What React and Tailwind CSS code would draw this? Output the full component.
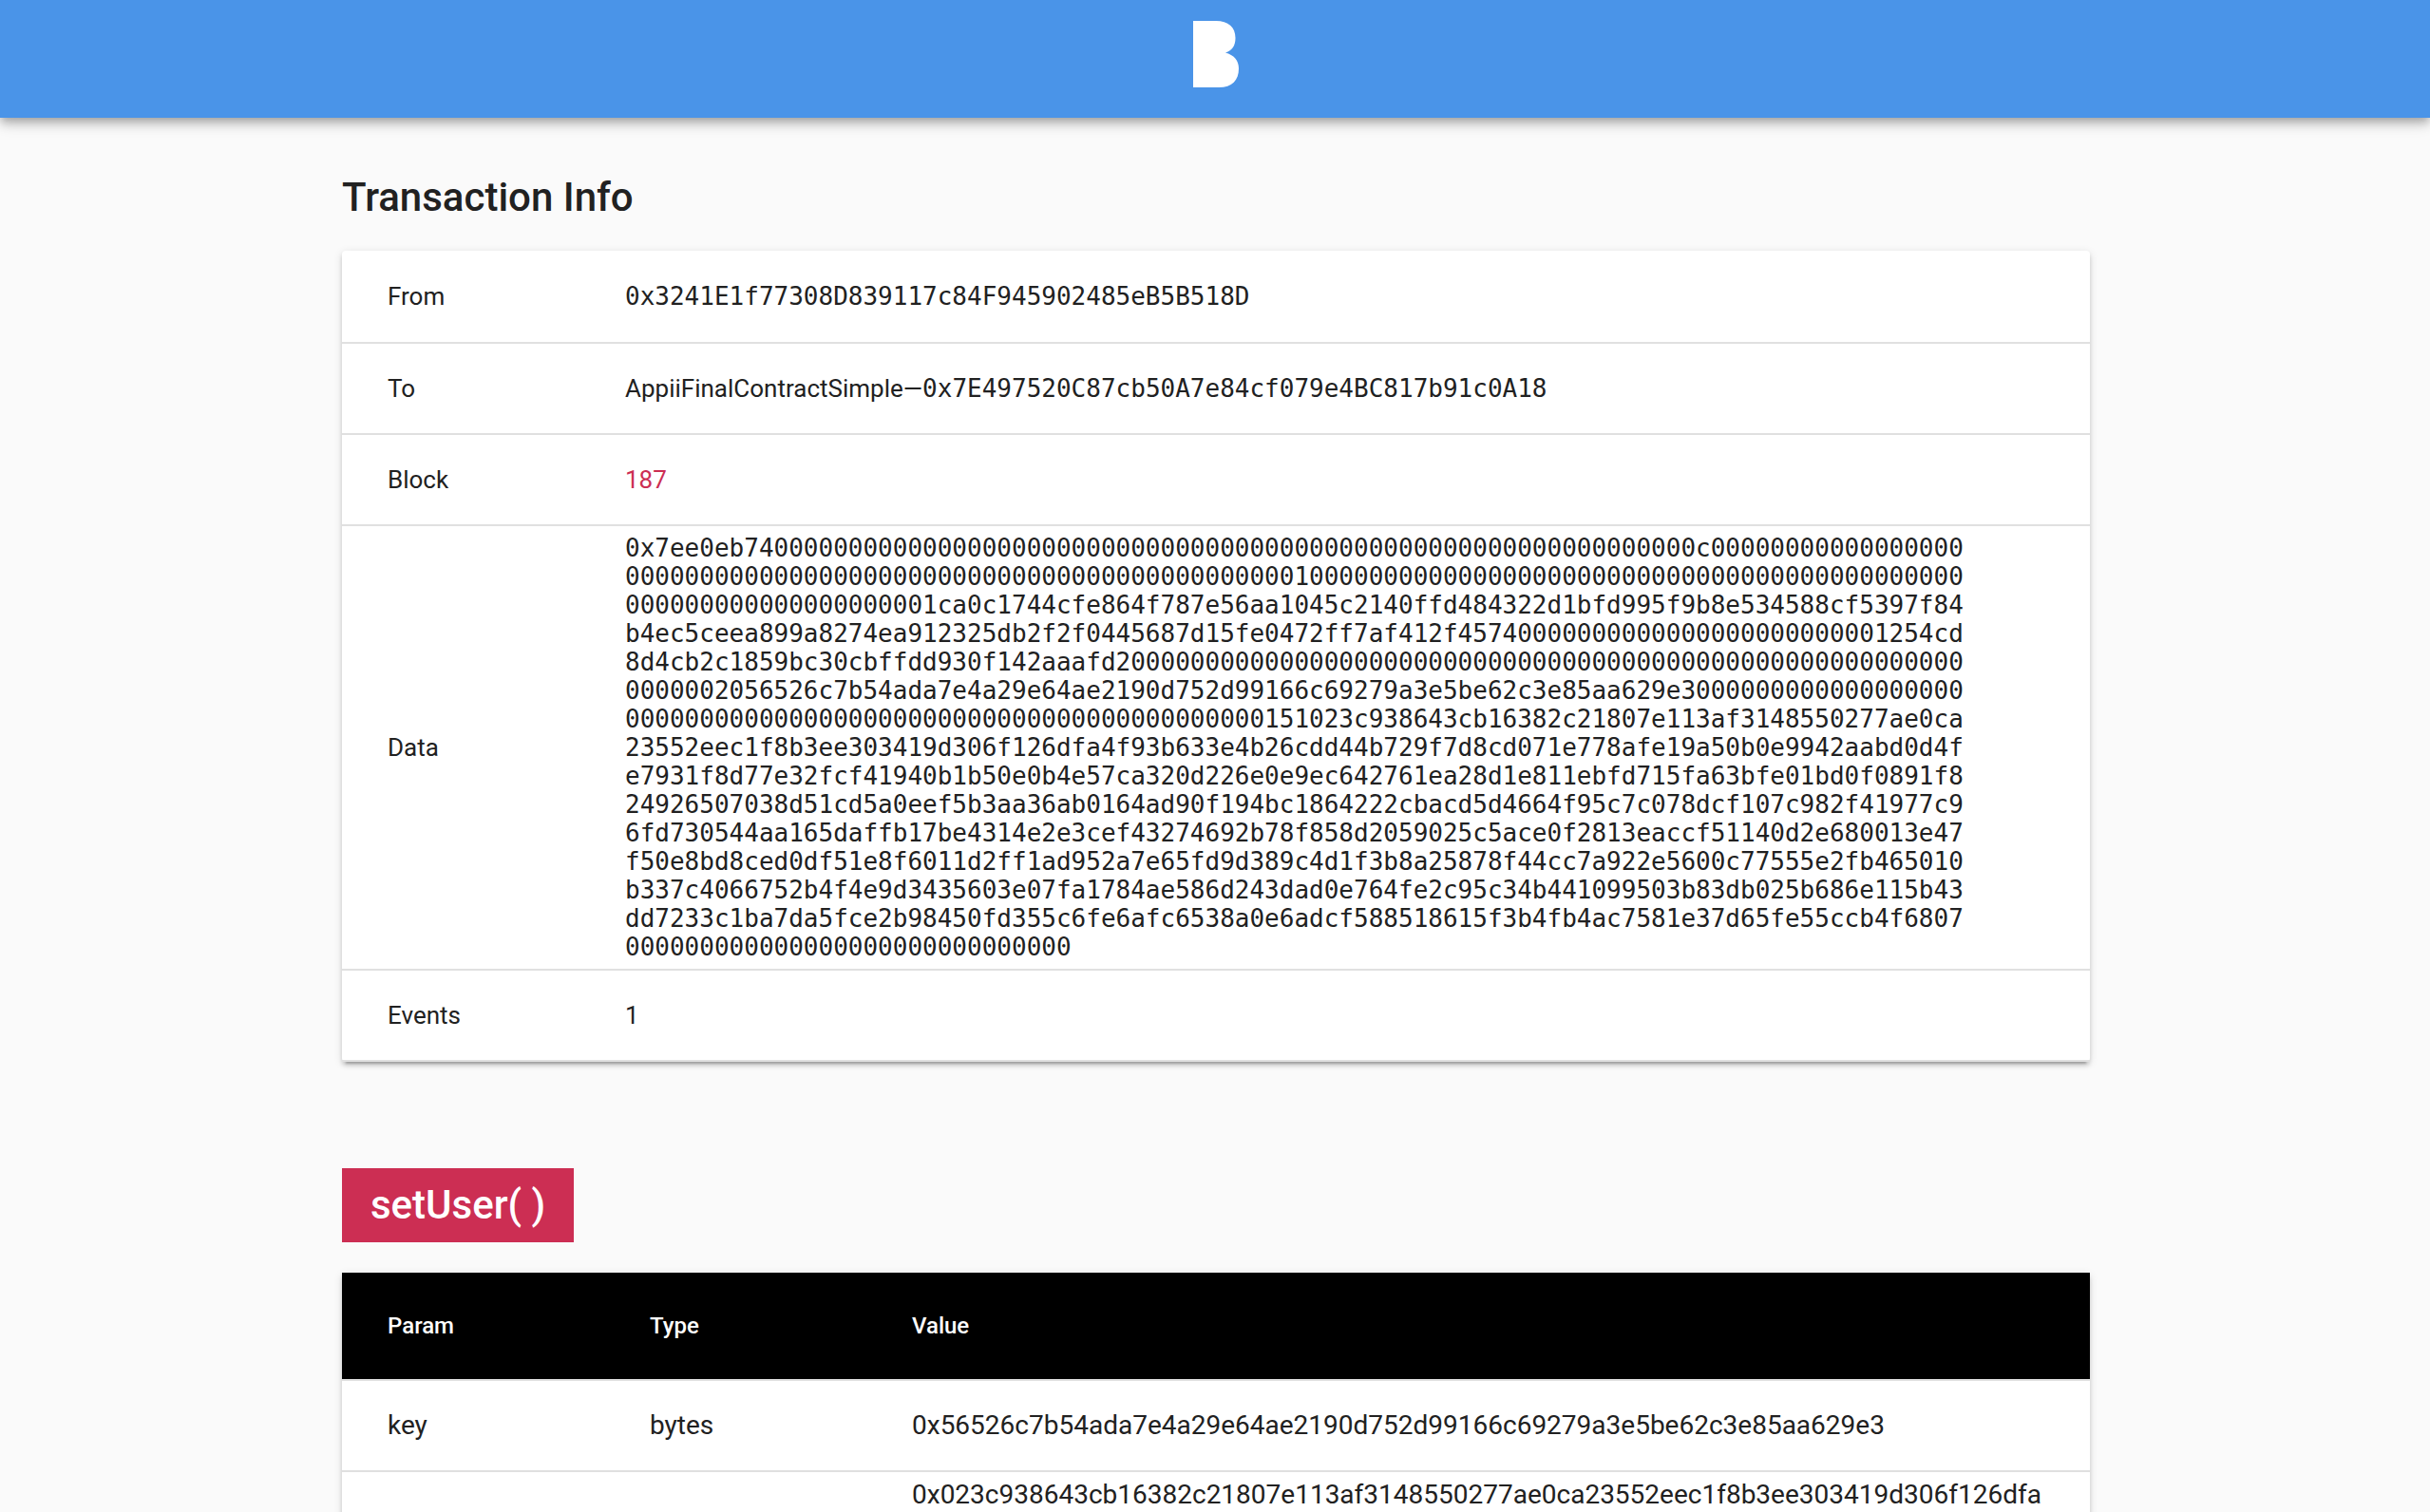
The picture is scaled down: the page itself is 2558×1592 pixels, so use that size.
import React from "react";

const txData = [
  "0x7ee0eb74",
  "0".repeat(62) + "c0",
  "0".repeat(61) + "100",
  "0".repeat(62) + "1c",
  "a0c1744cfe864f787e56aa1045c2140ffd484322d1bfd995f9b8e534588cf539",
  "7f84b4ec5ceea899a8274ea912325db2f2f0445687d15fe0472ff7af412f4574",
  "0".repeat(24) + "1254cd8d4cb2c1859bc30cbffdd930f142aaafd2",
  "0".repeat(62) + "20",
  "56526c7b54ada7e4a29e64ae2190d752d99166c69279a3e5be62c3e85aa629e3",
  "0".repeat(61) + "151",
];

const profile = [
  "023c938643cb16382c21807e113af3148550277ae0ca",
  "23552eec1f8b3ee303419d306f126dfa4f93b633e4b26cdd44b729f7d8cd071e778afe19a50b0e9942aabd0d4f",
  "e7931f8d77e32fcf41940b1b50e0b4e57ca320d226e0e9ec642761ea28d1e811ebfd715fa63bfe01bd0f0891f8",
  "24926507038d51cd5a0eef5b3aa36ab0164ad90f194bc1864222cbacd5d4664f95c7c078dcf107c982f41977c9",
  "6fd730544aa165daffb17be4314e2e3cef43274692b78f858d2059025c5ace0f2813eaccf51140d2e680013e47",
  "f50e8bd8ced0df51e8f6011d2ff1ad952a7e65fd9d389c4d1f3b8a25878f44cc7a922e5600c77555e2fb465010",
  "b337c4066752b4f4e9d3435603e07fa1784ae586d243dad0e764fe2c95c34b441099503b83db025b686e115b43",
  "dd7233c1ba7da5fce2b98450fd355c6fe6afc6538a0e6adcf588518615f3b4fb4ac7581e37d65fe55ccb4f6807",
].join("");

const data = txData.join("") + profile + "0".repeat(30);

function Mono({ children }) {
  return <span className="font-['DejaVu_Sans_Mono',monospace]">{children}</span>;
}

function Card({ children }) {
  return (
    <div className="rounded-[4px] bg-white shadow-[0_4px_4px_0_rgba(0,0,0,0.14),0_6px_2px_-4px_rgba(0,0,0,0.2),0_2px_10px_0_rgba(0,0,0,0.12)]">
      {children}
    </div>
  );
}

function InfoRow({ label, children }) {
  return (
    <tr className="h-24 first:h-[98px]">
      <th scope="row" className="w-[298px] border-b-2 border-[#e0e0e0] py-2 pl-12 text-left font-normal">{label}</th>
      <td className="border-b-2 border-[#e0e0e0] py-2 pr-12">{children}</td>
    </tr>
  );
}

function ParamRow({ name, type, value }) {
  return (
    <tr className="h-24">
      <td className="border-b-2 border-[#e0e0e0] px-12 py-2">{name}</td>
      <td className="border-b-2 border-[#e0e0e0] px-12 py-2">{type}</td>
      <td className="border-b-2 border-[#e0e0e0] px-12 py-2 break-all">{value}</td>
    </tr>
  );
}

export default function App() {
  return (
    <div className="min-h-screen bg-[#fafafa] font-[Roboto,sans-serif] text-[#212121]">
      <header className="flex h-[124px] justify-center bg-[#4a94e8] pt-[22px] pl-0.5 shadow-[0_4px_8px_-2px_rgba(0,0,0,0.2),0_8px_10px_rgba(0,0,0,0.14),0_2px_20px_rgba(0,0,0,0.12)]">
        <a href="#" aria-label="Home" className="h-[70px]">
          <svg width="48" height="70" viewBox="0 0 48 70" fill="#fff" aria-hidden="true">
            <path d="M0 0H24C37 0 44.500 6.500 44.500 18C44.500 26 41 31.500 34 33.500C43 36 48 41.500 48 50C48 62.500 41 70 27 70H0Z" />
          </svg>
        </a>
      </header>

      <main className="flex justify-center pl-0.5">
        <div className="w-full max-w-[1840px]">
          <section className="pt-[60px]">
            <h1 className="text-[42px] leading-[48px] font-medium">Transaction Info</h1>
            <div className="mt-8">
              <Card>
                <table className="w-full table-fixed border-separate border-spacing-0 text-[26px] leading-[30px]">
                  <tbody>
                    <InfoRow label="From"><Mono>0x3241E1f77308D839117c84F945902485eB5B518D</Mono></InfoRow>
                    <InfoRow label="To">AppiiFinalContractSimple—<Mono>0x7E497520C87cb50A7e84cf079e4BC817b91c0A18</Mono></InfoRow>
                    <InfoRow label="Block"><a href="#" className="text-[#cc2e53]">187</a></InfoRow>
                    <InfoRow label="Data"><div className="max-w-[1420px] break-all"><Mono>{data}</Mono></div></InfoRow>
                    <InfoRow label="Events">1</InfoRow>
                  </tbody>
                </table>
              </Card>
            </div>
          </section>

          <section className="pt-28">
            <h2 className="inline-block bg-[#cc2e53] px-[30px] py-[15px] align-top text-[42px] leading-[48px] font-medium text-white">setUser( )</h2>
            <div className="mt-8">
              <Card>
                <table className="w-full table-fixed border-separate border-spacing-0 text-[28px] leading-8">
                  <thead>
                    <tr className="h-[114px] text-left text-2xl text-white">
                      <th scope="col" className="w-[15%] border-b-2 border-[#e0e0e0] bg-black px-12 font-medium">Param</th>
                      <th scope="col" className="w-[15%] border-b-2 border-[#e0e0e0] bg-black px-12 font-medium">Type</th>
                      <th scope="col" className="border-b-2 border-[#e0e0e0] bg-black px-12 font-medium">Value</th>
                    </tr>
                  </thead>
                  <tbody>
                    <ParamRow name="key" type="bytes" value="0x56526c7b54ada7e4a29e64ae2190d752d99166c69279a3e5be62c3e85aa629e3" />
                    <ParamRow value={"0x" + profile} />
                  </tbody>
                </table>
              </Card>
            </div>
          </section>
        </div>
      </main>
    </div>
  );
}
